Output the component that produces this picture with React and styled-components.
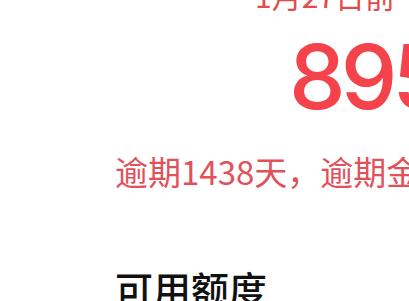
import React from 'react';
import styled, { createGlobalStyle } from 'styled-components';

const GlobalStyle = createGlobalStyle`
    html, body {
        margin: 0;
        padding: 0;
        background: #FFFFFF;
    }
`;

const Screen = styled.div`
    width: 409px;
    height: 301px;
    overflow: hidden;
    background: #FFFFFF;
    font-family: "Noto Sans CJK SC", "Noto Sans", sans-serif;
`;

const Summary = styled.div`
    display: flex;
    flex-direction: column;
    align-items: flex-start;
    margin-top: -24px;
    padding-left: 115px;
    white-space: nowrap;
`;

const DueDate = styled.div`
    font-size: 30px;
    line-height: 38px;
    color: #E44A4A;
    padding-left: 140px;
`;

const Amount = styled.div`
    font-family: Inter, Roboto, sans-serif;
    font-size: 90px;
    font-weight: 500;
    letter-spacing: -5px;
    line-height: 100px;
    color: #F5434B;
    padding-left: 174px;
    margin-top: 13px;
`;

const Overdue = styled.div`
    font-size: 33px;
    line-height: 40px;
    color: #E2505A;
    margin-top: 24px;
`;

const SectionTitle = styled.h2`
    margin: 73px 0 0;
    font-size: 38px;
    line-height: 48px;
    font-weight: 500;
    color: #111111;
`;

export default function App() {
    return (
        <>
            <GlobalStyle />
            <Screen>
                <Summary>
                    <DueDate>1月27日前</DueDate>
                    <Amount>895.00</Amount>
                    <Overdue>逾期1438天，逾期金额895.00元</Overdue>
                    <SectionTitle>可用额度</SectionTitle>
                </Summary>
            </Screen>
        </>
    );
}
